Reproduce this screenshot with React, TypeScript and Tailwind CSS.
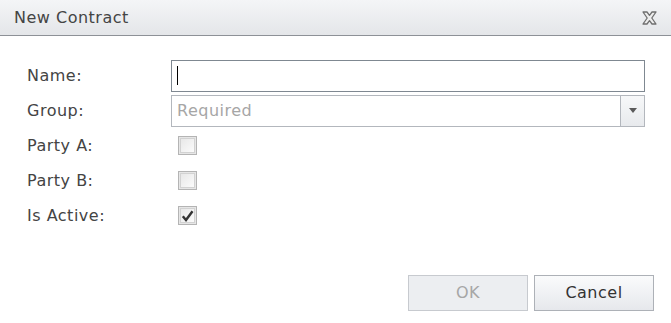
import React from 'react';

const FONT = { fontFamily: '"DejaVu Sans", Verdana, sans-serif' };

function CloseIcon() {
  return (
    <svg width="15" height="14" viewBox="0 0 15 14">
      <path
        d="M1 1 H5 L7.5 4.3 L10 1 H14 L9.8 7 L14 13 H10 L7.5 9.7 L5 13 H1 L5.2 7 Z"
        fill="#ededed"
        stroke="#6f6f6f"
        strokeWidth="1.3"
        strokeLinejoin="round"
      />
    </svg>
  );
}

function Check({ checked = false }: { checked?: boolean }) {
  return (
    <span className="flex h-[19px] w-[19px] items-center justify-center border border-[#b4b4b4] bg-[#e6e6e6]">
      <span className="flex h-[15px] w-[15px] items-center justify-center border border-[#d2d2d2] bg-gradient-to-br from-[#e8e8e8] to-[#fbfbfb]">
        {checked && (
          <svg width="13" height="12" viewBox="0 0 13 12">
            <path d="M1.8 6.2 L5 10 L11.5 1.2" fill="none" stroke="#333" strokeWidth="2.4" />
          </svg>
        )}
      </span>
    </span>
  );
}

const ROWS: { label: string; kind: 'name' | 'group' | 'check'; checked?: boolean }[] = [
  { label: 'Name:', kind: 'name' },
  { label: 'Group:', kind: 'group' },
  { label: 'Party A:', kind: 'check' },
  { label: 'Party B:', kind: 'check' },
  { label: 'Is Active:', kind: 'check', checked: true },
];

export default function App() {
  return (
    <div className="flex h-[323px] w-[671px] flex-col bg-white text-[#444] tracking-[0.5px]" style={FONT}>
      {/* title bar */}
      <div className="flex h-[36px] items-center justify-between border-b border-[#8d9197] bg-gradient-to-b from-[#f4f5f7] to-[#e4e6e9] pl-[14px] pr-[14px]">
        <span className="pt-px text-[16px] text-[#444]">New Contract</span>
        <CloseIcon />
      </div>

      {/* form */}
      <div className="grid grid-cols-[144px_1fr] pl-[27px] pr-[26px] pt-[22px] text-[16px]">
        {ROWS.map((r) => (
          <React.Fragment key={r.label}>
            <div className="flex h-[35px] items-center pt-px">{r.label}</div>
            <div className="flex h-[35px] items-center">
              {r.kind === 'name' && (
                <div className="flex h-[32px] w-full items-center border border-[#7f8891] bg-white pl-[5px]">
                  <span className="h-[19px] w-px bg-black" />
                </div>
              )}
              {r.kind === 'group' && (
                <div className="flex h-[32px] w-full border border-[#b3b7bd] bg-white">
                  <span className="flex flex-1 items-center pl-[5px] pt-px text-[#a6a6a6]">Required</span>
                  <span className="flex w-[24px] items-center justify-center border-l border-[#b3b7bd] bg-gradient-to-b from-[#f7f8f9] to-[#e8eaed]">
                    <svg width="8" height="5" viewBox="0 0 8 5">
                      <path d="M0 0 H8 L4 5 Z" fill="#5a5a5a" />
                    </svg>
                  </span>
                </div>
              )}
              {r.kind === 'check' && (
                <span className="pl-[7px]">
                  <Check checked={r.checked} />
                </span>
              )}
            </div>
          </React.Fragment>
        ))}
      </div>

      {/* buttons */}
      <div className="mt-auto flex justify-end gap-[6px] pb-[12px] pr-[17px]">
        <button className="h-[36px] w-[120px] border border-[#c7cacf] bg-[#eceef1] text-[16px] text-[#a6a6a6]">
          OK
        </button>
        <button className="h-[36px] w-[120px] border border-[#adb1b7] bg-gradient-to-b from-[#fafbfc] to-[#e6e8ec] text-[16px] text-[#333]">
          Cancel
        </button>
      </div>
    </div>
  );
}
